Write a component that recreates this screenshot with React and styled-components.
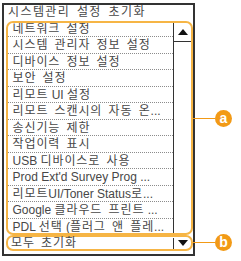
import React from 'react';
import styled, { createGlobalStyle } from 'styled-components';

const ORANGE_LINE = '#f6b545';
const ORANGE_DOT = '#f29a16';
const INK = '#474747';

const GlobalStyle = createGlobalStyle`
    html, body {
        margin: 0;
        background: #fff;
    }
    body {
        font-family: "Liberation Sans", "Noto Sans CJK KR", sans-serif;
        color: ${INK};
    }
`;

const Page = styled.div`
    position: relative;
    width: 241px;
    height: 261px;
    padding: 3px 0 0 2px;
    box-sizing: border-box;
`;

const Frame = styled.div`
    width: 193px;
    height: 253px;
    box-sizing: border-box;
    border: 2px solid #333;
    display: flex;
    flex-direction: column;
`;

const Title = styled.div`
    height: 15px;
    line-height: 15px;
    padding-left: 4px;
    font-size: 12px;
    letter-spacing: 1.4px;
    word-spacing: 2px;
    white-space: nowrap;
`;

const ListBox = styled.div`
    margin: 1px 0 0 2px;
    height: 214px;
    box-sizing: border-box;
    border: 2px solid ${ORANGE_LINE};
    border-radius: 7px;
    display: flex;
    overflow: hidden;
`;

const Items = styled.div`
    flex: 1;
    min-width: 0;
    margin-top: -2.5px;
    display: flex;
    flex-direction: column;
`;

const Row = styled.div`
    flex: 0 0 16.5px;
    box-sizing: border-box;
    border-bottom: 1px dotted #8c8c8c;
    padding-left: 4.5px;
    font-size: 12px;
    line-height: 16px;
    white-space: nowrap;
    overflow: hidden;
`;

// Hangul runs are set wider than Latin ones, as on the device panel
const Hangul = styled.span`
    letter-spacing: 0.9px;
    word-spacing: 2px;
`;

const ScrollCol = styled.div`
    flex: 0 0 18px;
    box-sizing: border-box;
    border-left: 1px solid #333;
    display: flex;
    flex-direction: column;
`;

const ArrowButton = styled.div`
    height: 19px;
    box-sizing: border-box;
    display: flex;
    align-items: center;
    justify-content: center;
    border-bottom: ${p => (p.$bottom ? '1px solid #333' : 'none')};
`;

const Triangle = styled.span`
    width: 0;
    height: 0;
    border-left: 5px solid transparent;
    border-right: 5px solid transparent;
    ${p => (p.$down ? 'border-top: 6px solid #111;' : 'border-bottom: 6px solid #111;')}
`;

const Footer = styled.div`
    margin: 0 0 0 2px;
    height: 16px;
    box-sizing: border-box;
    border: 2px solid ${ORANGE_LINE};
    border-radius: 7px;
    display: flex;
    align-items: center;
`;

const FooterText = styled.div`
    flex: 1;
    min-width: 0;
    padding-left: 3px;
    font-size: 12px;
    line-height: 12px;
    white-space: nowrap;
`;

const FooterButton = styled.div`
    flex: 0 0 18px;
    box-sizing: border-box;
    height: 11px;
    border-left: 1px solid #333;
    display: flex;
    align-items: center;
    justify-content: center;
`;

const Callout = styled.div`
    position: absolute;
    left: 193px;
    top: ${p => p.$y - 9}px;
    height: 17px;
    display: flex;
    align-items: center;
`;

const Leader = styled.span`
    width: 22px;
    height: 1px;
    background: ${ORANGE_DOT};
`;

const Badge = styled.span`
    width: 17px;
    height: 17px;
    border-radius: 50%;
    background: ${ORANGE_DOT};
    color: #fff;
    font-family: "Liberation Sans", sans-serif;
    font-size: 14px;
    font-weight: bold;
    line-height: 16px;
    text-align: center;
`;

const items = [
    '네트워크 설정',
    '시스템 관리자 정보 설정',
    '디바이스 정보 설정',
    '보안 설정',
    '리모트 UI 설정',
    '리모트 스캔시의 자동 온...',
    '송신기능 제한',
    '작업이력 표시',
    'USB 디바이스로 사용',
    "Prod Ext'd Survey Prog ...",
    '리모트UI/Toner Status로...',
    'Google 클라우드 프린트 ...',
    'PDL 선택 (플러그 앤 플레...',
];

const HANGUL_RUN = /([\uAC00-\uD7A3]+(?:\s+[\uAC00-\uD7A3]+)*)/;

const Label = ({ text }) =>
    text.split(HANGUL_RUN).map((part, i) =>
        i % 2 === 1 ? <Hangul key={i}>{part}</Hangul> : part
    );

const App = () => {
    return (
        <Page>
            <GlobalStyle />
            <Frame>
                <Title>시스템관리 설정 초기화</Title>
                <ListBox>
                    <Items>
                        {items.map(label => (
                            <Row key={label}>
                                <Label text={label} />
                            </Row>
                        ))}
                    </Items>
                    <ScrollCol>
                        <ArrowButton $bottom>
                            <Triangle />
                        </ArrowButton>
                    </ScrollCol>
                </ListBox>
                <Footer>
                    <FooterText>
                        <Label text="모두 초기화" />
                    </FooterText>
                    <FooterButton>
                        <Triangle $down />
                    </FooterButton>
                </Footer>
            </Frame>
            <Callout $y={119}>
                <Leader />
                <Badge>a</Badge>
            </Callout>
            <Callout $y={243}>
                <Leader />
                <Badge>b</Badge>
            </Callout>
        </Page>
    );
};

export default App;
